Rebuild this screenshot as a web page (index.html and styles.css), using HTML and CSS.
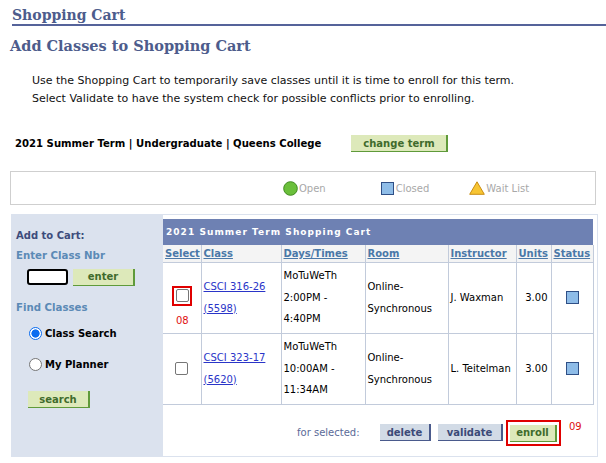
FILE: index.html
```html
<!DOCTYPE html>
<html>
<head>
<meta charset="utf-8">
<link rel="stylesheet" href="styles.css">
</head>
<body>
<div class="page-title">Shopping Cart</div>
<h1 class="heading">Add Classes to Shopping Cart</h1>
<div class="intro">
  <p>Use the Shopping Cart to temporarily save classes until it is time to enroll for this term.</p>
  <p>Select Validate to have the system check for possible conflicts prior to enrolling.</p>
</div>
<div class="term-row">
  <span class="term">2021 Summer Term | Undergraduate | Queens College</span>
  <span class="btn btn-green btn-change">change term</span>
</div>
<div class="legend">
  <span class="leg"><svg width="15" height="15" viewBox="0 0 15 15"><circle cx="7.5" cy="7.5" r="6.8" fill="#6abf3a" stroke="#3f8a1e" stroke-width="1"/></svg>Open</span>
  <span class="leg leg-closed"><svg width="13" height="13" viewBox="0 0 13 13"><rect x="0.5" y="0.5" width="12" height="12" fill="#8fbde8" stroke="#2f4f86" stroke-width="1"/></svg>Closed</span>
  <span class="leg leg-wait"><svg width="16" height="14" viewBox="0 0 16 14"><polygon points="8,0.8 15.3,13.3 0.7,13.3" fill="#f7c533" stroke="#c98d12" stroke-width="1"/></svg>Wait List</span>
</div>
<div class="main">
  <div class="side">
    <div class="side-title">Add to Cart:</div>
    <div class="side-sub">Enter Class Nbr</div>
    <div class="enter-row">
      <span class="nbr-input"></span>
      <span class="btn btn-green btn-enter">enter</span>
    </div>
    <div class="side-sub find">Find Classes</div>
    <div class="radio-row"><span class="radio on"></span>Class Search</div>
    <div class="radio-row second"><span class="radio"></span>My Planner</div>
    <span class="btn btn-green btn-search">search</span>
  </div>
  <div class="cart">
    <div class="cart-head">2021 Summer Term Shopping Cart</div>
    <table class="grid">
      <colgroup>
        <col class="w-sel"><col class="w-class"><col class="w-days"><col class="w-room"><col class="w-inst"><col class="w-units"><col class="w-status">
      </colgroup>
      <thead>
        <tr>
          <th>Select</th>
          <th>Class</th>
          <th>Days/Times</th>
          <th>Room</th>
          <th>Instructor</th>
          <th>Units</th>
          <th>Status</th>
        </tr>
      </thead>
      <tbody>
        <tr>
          <td class="center sel-cell"><span class="red-box"><span class="chk"></span></span><span class="anno">08</span></td>
          <td><a>CSCI 316-26</a><br><a>(5598)</a></td>
          <td>MoTuWeTh<br>2:00PM -<br>4:40PM</td>
          <td>Online-<br>Synchronous</td>
          <td>J. Waxman</td>
          <td class="num">3.00</td>
          <td class="center"><span class="status"></span></td>
        </tr>
        <tr>
          <td class="center"><span class="chk"></span></td>
          <td><a>CSCI 323-17</a><br><a>(5620)</a></td>
          <td>MoTuWeTh<br>10:00AM -<br>11:34AM</td>
          <td>Online-<br>Synchronous</td>
          <td>L. Teitelman</td>
          <td class="num">3.00</td>
          <td class="center"><span class="status"></span></td>
        </tr>
      </tbody>
    </table>
    <div class="actions">
      <span class="for-sel">for selected:</span>
      <span class="btn btn-blue btn-delete">delete</span>
      <span class="btn btn-blue btn-validate">validate</span>
      <span class="enroll-box"><span class="btn btn-green">enroll</span></span>
      <span class="anno anno-09">09</span>
    </div>
  </div>
</div>
</body>
</html>
```
FILE: styles.css
```css
html, body { margin: 0; padding: 0; background: #fff; }
body {
  font-family: "DejaVu Sans", Verdana, sans-serif;
  font-size: 10px;
  color: #000;
  width: 606px;
  height: 463px;
  overflow: hidden;
}
.page-title {
  margin-left: 12px;
  font-family: "DejaVu Serif", Georgia, serif;
  font-weight: bold;
  font-size: 14px;
  color: #4d5c8c;
  height: 24px;
  line-height: 30px;
  border-bottom: 2px solid #55639a;
}
.heading {
  margin: 10px 0 0 10px;
  font-family: "DejaVu Serif", Georgia, serif;
  font-weight: bold;
  font-size: 14.5px;
  color: #4d5c8c;
  line-height: 20px;
}
.intro { margin: 15.5px 0 0 32px; }
.intro p { margin: 0; line-height: 18px; color: #111; font-size: 11px; }
.term-row {
  display: flex;
  align-items: center;
  margin: 27.5px 0 0 15px;
  height: 17px;
}
.term { font-weight: bold; font-size: 10.1px; color: #000; }
.btn {
  display: inline-flex;
  align-items: center;
  justify-content: center;
  height: 17px;
  font-weight: bold;
  font-size: 10px;
  box-sizing: border-box;
}
.btn-green {
  background: #dde9ba;
  color: #3f6b2c;
  border-right: 2px solid #5f9a3a;
  border-bottom: 1px solid #5f9a3a;
}
.btn-blue {
  background: #d2dbe6;
  color: #3b4a78;
  border-right: 2px solid #4a5a8c;
  border-bottom: 1px solid #4a5a8c;
}
.btn-change { width: 97px; margin-left: 30px; }
.legend {
  margin: 19px 0 0 10px;
  width: 586px;
  height: 34px;
  box-sizing: border-box;
  border: 1px solid #cfcfcf;
  display: flex;
  align-items: center;
  padding-left: 272px;
  color: #a8a8a8;
  font-size: 10px;
}
.leg { display: inline-flex; align-items: center; }
.leg svg { margin-right: 1px; }
.leg-closed { margin-left: 55px; }
.leg-closed svg { margin-right: 2px; }
.leg-wait { margin-left: 40px; }
.main {
  display: flex;
  margin: 9px 0 0 11px;
}
.side {
  width: 151px;
  background: #dbe2ee;
  box-sizing: border-box;
  padding: 14.5px 0 0 5px;
  height: 243px;
}
.side-title { font-weight: bold; color: #3d4c7c; line-height: 14px; }
.side-sub { font-weight: bold; color: #5b8ab6; margin-top: 6.3px; line-height: 14px; font-size: 10.2px; }
.enter-row { display: flex; align-items: center; margin: 6px 0 0 11px; height: 17px; }
.nbr-input {
  width: 41px; height: 16px; box-sizing: border-box;
  border: 2px solid #000; border-radius: 3px; background: #fff;
}
.btn-enter { width: 62px; margin-left: 5px; }
.find { margin-top: 15.5px; }
.radio-row {
  display: flex; align-items: center;
  font-weight: bold; color: #000;
  margin: 9.5px 0 0 13px;
  height: 18px;
}
.radio-row.second { margin-top: 13px; }
.radio {
  width: 11px; height: 11px; border-radius: 50%;
  border: 1px solid #767676; background: #fff;
  margin-right: 3px; box-sizing: content-box;
}
.radio.on {
  border-color: #0a6cf0;
  background: radial-gradient(circle, #0a6cf0 0 3.8px, #fff 4.4px 100%);
}
.btn-search { width: 62px; margin: 17.5px 0 0 12px; }
.cart {
  width: 436px;
  border: 1px solid #dbe2ee;
  box-sizing: border-box;
  padding: 4px 4px 0 0;
  height: 243px;
}
.cart-head {
  background: #6e81b3;
  color: #fff;
  font-weight: bold;
  font-size: 9px;
  letter-spacing: 1.05px;
  height: 26px;
  line-height: 27px;
  padding-left: 3px;
  width: 430px;
  box-sizing: border-box;
}
.grid { border-collapse: collapse; width: 430px; table-layout: fixed; }
.w-sel { width: 38px; }
.w-class { width: 80px; }
.w-days { width: 84px; }
.w-room { width: 83px; }
.w-inst { width: 68px; }
.w-units { width: 35px; }
.w-status { width: 42px; }
.grid th {
  background: #f4f4f4;
  color: #4a78a8;
  text-decoration: underline;
  font-weight: bold;
  text-align: left;
  height: 17px;
  padding: 0 2px;
  border: 1px solid #c2cbdb;
  border-top: 0;
  white-space: nowrap;
  box-sizing: border-box;
}
.grid th:first-child, .grid td:first-child { border-left: 0; }
.grid td {
  border: 1px solid #c2cbdb;
  padding: 0 2px;
  line-height: 21.5px;
  height: 71px;
  box-sizing: border-box;
  vertical-align: middle;
  white-space: nowrap;
}
.grid a { color: #2a35c8; text-decoration: underline; }
.grid td.center { text-align: center; }
.grid td.num { text-align: right; padding-right: 3px; }
.chk {
  display: inline-block; width: 11px; height: 11px;
  border: 1px solid #767676; border-radius: 2px; background: #fff;
  vertical-align: middle;
}
.grid td.sel-cell { line-height: 12px; vertical-align: top; padding-top: 23px; padding-left: 3px; }
.red-box {
  display: inline-block; border: 2px solid #e00000;
  padding: 1.5px; line-height: 0;
}
.anno { color: #e01010; font-size: 10px; display: block; margin-top: 9px; line-height: 12px; }
.status {
  display: inline-block; width: 11px; height: 11px;
  background: #8ebce8; border: 1px solid #2f4f86;
  vertical-align: middle;
}
.actions {
  display: flex; align-items: center;
  padding-left: 134px;
  margin-top: 14px;
  height: 28px;
}
.for-sel { color: #5a6a98; width: 83px; }
.btn-delete { width: 51px; margin-right: 7px; }
.btn-validate { width: 65px; }
.enroll-box {
  display: inline-flex; border: 2px solid #e00000;
  padding: 3px 2px 2px 2px; margin-left: 3px;
}
.enroll-box .btn { width: 47px; }
.anno-09 { margin: -12px 0 0 8px; }
```
